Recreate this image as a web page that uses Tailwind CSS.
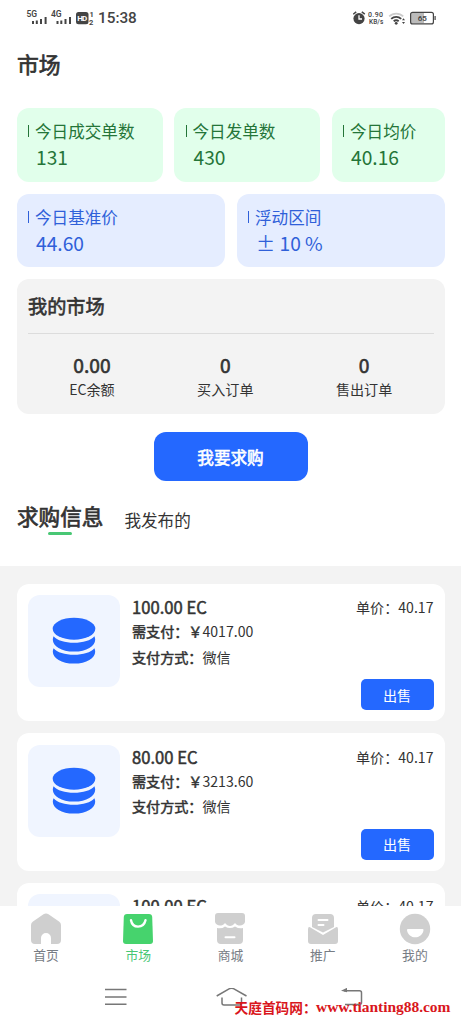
<!DOCTYPE html>
<html lang="zh-CN">
<head>
<meta charset="utf-8">
<meta name="viewport" content="width=device-width, initial-scale=1">
<title>市场</title>
<script src="https://cdn.jsdelivr.net/npm/@tailwindcss/browser@4"></script>
</head>
<body class="bg-white">
<svg class="hidden" aria-hidden="true">
  <symbol id="coins" viewBox="0 0 44 48">
    <ellipse cx="22" cy="11.700" rx="21.300" ry="11"/>
    <path d="M1.600 19.300C5 23.500 13 25.800 22 25.800S39 23.500 42.400 19.300C46 27 37 34.600 22 34.600S-2 27 1.600 19.300Z"/>
    <path d="M1.600 31.300C5 35.500 13 37.800 22 37.800S39 35.500 42.400 31.300C46 39 37 46.600 22 46.600S-2 39 1.600 31.300Z"/>
  </symbol>
</svg>
<div class="relative flex h-[1024px] w-[461px] flex-col overflow-hidden bg-white font-['Noto_Sans_CJK_SC',sans-serif] text-[#333]">
  <!-- status bar -->
  <header class="flex h-9 shrink-0 items-center justify-between pl-[26px] pr-[24px] font-[Roboto,sans-serif] text-[#444]">
    <div class="flex items-center">
      <svg class="h-4 w-[69px]" viewBox="0 0 69 16" fill="#444">
        <text x="0.5" y="7" font-size="8.500" font-weight="600" textLength="10.5">5G</text>
        <path d="M6 11h2v3H6zM9.8 10.5h2V14h-2zM14 9h2v5h-2zM18.6 7h2v7h-2zM30.5 11h2v3h-2zM34.3 10.5h2V14h-2zM38.5 9h2v5h-2zM43 7h2v7h-2z"/>
        <text x="25" y="7" font-size="8.500" font-weight="600" textLength="10.5">4G</text>
        <rect x="50" y="2" width="12.5" height="12.3" rx="2.5"/>
        <text x="51.3" y="11.3" font-size="8" font-weight="700" fill="#fff" textLength="10">HD</text>
        <text x="63.6" y="7.4" font-size="7.5" font-weight="700">1</text>
        <text x="63" y="14.5" font-size="7.5" font-weight="700">2</text>
      </svg>
      <span class="ml-[3px] text-[15.3px] font-medium leading-4">15:38</span>
    </div>
    <svg class="h-4 w-[84px]" viewBox="0 0 84 16" fill="#444">
      <circle cx="6" cy="8.6" r="5.6"/>
      <path d="M.2 4.2 3.2 1.9M11.8 4.2 8.8 1.9" stroke="#444" stroke-width="1.5" fill="none"/>
      <path d="M6 5.3v3.7h3" stroke="#fff" stroke-width="1.3" fill="none"/>
      <text x="15" y="7.4" font-size="7" font-weight="500" textLength="15">0.90</text>
      <text x="16" y="14" font-size="6.5" font-weight="500" textLength="14.3">KB/s</text>
      <g fill="none" stroke-width="1.8"><path d="M36.2 6.4a10 10 0 0 1 14 0" stroke="#ccc"/><path d="M38.2 8.9a7.2 7.2 0 0 1 10 0M40.7 11.3a3.8 3.8 0 0 1 5 0" stroke="#444"/></g>
      <circle cx="43.2" cy="13.3" r="1.4"/>
      <path d="m49 10.2 1.5-2 1.5 2zM49 11.9l1.5 2 1.5-2z"/>
      <rect x="58" y="3" width="13" height="10" fill="#bbb"/>
      <rect x="57.6" y="2.3" width="22.8" height="11.6" rx="2" fill="none" stroke="#444" stroke-width="1.2"/>
      <path d="M81.5 6h1.2v4h-1.2z"/>
      <text x="64.8" y="10.9" font-size="8" font-weight="600">65</text>
    </svg>
  </header>

  <h1 class="ml-[17px] mt-3 shrink-0 text-[21.8px] leading-8 [-webkit-text-stroke:0.7px]">市场</h1>

  <!-- statistics -->
  <section class="ml-[16.5px] mr-4 mt-[28.3px] shrink-0 text-[16.6px] leading-6">
    <div class="flex gap-[11.500px] text-[#247538]">
      <div class="h-[73.7px] w-[146px] rounded-xl bg-[#e1ffeb] pl-[11.500px] pt-[11px]">
        <div class="flex items-center gap-1.5"><i class="h-3 w-px bg-current"></i>今日成交单数</div>
        <div class="ml-2 mt-0.5 text-[19.2px]">131</div>
      </div>
      <div class="h-[73.7px] w-[146px] rounded-xl bg-[#e1ffeb] pl-[11.500px] pt-[11px]">
        <div class="flex items-center gap-1.5"><i class="h-3 w-px bg-current"></i>今日发单数</div>
        <div class="ml-2 mt-0.5 text-[19.2px]">430</div>
      </div>
      <div class="h-[73.7px] flex-1 rounded-xl bg-[#e1ffeb] pl-[11.500px] pt-[11px]">
        <div class="flex items-center gap-1.5"><i class="h-3 w-px bg-current"></i>今日均价</div>
        <div class="ml-2 mt-0.5 text-[19.2px]">40.16</div>
      </div>
    </div>
    <div class="mt-[11.600px] grid grid-cols-2 gap-[11.500px] text-[#2f60d9]">
      <div class="h-[73.7px] rounded-xl bg-[#e5edff] pl-[11.500px] pt-[11px]">
        <div class="flex items-center gap-1.5"><i class="h-3 w-px bg-current"></i>今日基准价</div>
        <div class="ml-2 mt-0.5 text-[19.2px]">44.60</div>
      </div>
      <div class="h-[73.7px] rounded-xl bg-[#e5edff] pl-[11.500px] pt-[11px]">
        <div class="flex items-center gap-1.5"><i class="h-3 w-px bg-current"></i>浮动区间</div>
        <div class="ml-2 mt-0.5 text-[19.2px]">± 10 %</div>
      </div>
    </div>
  </section>

  <!-- my market -->
  <section class="ml-[16.5px] mr-4 mt-[11.700px] h-[135.5px] shrink-0 rounded-xl bg-[#f3f3f3] px-[11.5px]">
    <h2 class="h-[55.5px] border-b border-[#dcdcdc] text-[19.2px] leading-[55px] [-webkit-text-stroke:0.6px]">我的市场</h2>
    <div class="flex justify-around pt-[18.500px] text-center text-[14.1px] leading-6">
      <div><div class="text-[19.2px] [-webkit-text-stroke:0.6px]">0.00</div><div>EC余额</div></div>
      <div><div class="text-[19.2px] [-webkit-text-stroke:0.6px]">0</div><div>买入订单</div></div>
      <div><div class="text-[19.2px] [-webkit-text-stroke:0.6px]">0</div><div>售出订单</div></div>
    </div>
  </section>

  <button class="mx-auto mt-[18px] h-[49px] w-[154px] shrink-0 rounded-xl bg-[#2468ff] text-[16.6px] leading-6 text-white [-webkit-text-stroke:0.6px]">我要求购</button>

  <!-- tabs -->
  <nav class="flex h-[84.5px] shrink-0 gap-[21px] pl-[17px] pt-[19px]">
    <div class="flex flex-col items-center">
      <span class="text-[21.6px] leading-8 [-webkit-text-stroke:0.7px]">求购信息</span>
      <i class="h-[2.5px] w-6 rounded-full bg-[#48c774]"></i>
    </div>
    <span class="pt-1.5 text-[16.6px] leading-7">我发布的</span>
  </nav>

  <!-- orders -->
  <main class="flex h-[340.4px] shrink-0 flex-col gap-[11.800px] overflow-hidden bg-[#f3f3f3] pl-[16.5px] pr-4 pt-[18px]">
    <article class="flex h-[137.5px] shrink-0 rounded-xl bg-white pl-[11.500px] pr-[11.5px] pt-[11.5px]">
      <div class="flex size-[92px] items-center justify-center rounded-xl bg-[#f0f5ff]"><svg class="h-12 w-11" fill="#2468ff"><use href="#coins"/></svg></div>
      <div class="ml-3 text-[14.1px] leading-[25.6px]">
        <div class="text-[16.6px] leading-6 [-webkit-text-stroke:0.5px]">100.00 EC</div>
        <div><span class="[-webkit-text-stroke:0.5px]">需支付：￥</span>4017.00</div>
        <div><span class="[-webkit-text-stroke:0.5px]">支付方式：</span>微信</div>
      </div>
      <div class="ml-auto flex flex-col items-end">
        <span class="text-[14.1px] leading-6">单价：40.17</span>
        <button class="mt-[60px] h-[31px] w-[73px] rounded-[5px] bg-[#2468ff] text-[14.1px] leading-5 text-white">出售</button>
      </div>
    </article>
    <article class="flex h-[137.5px] shrink-0 rounded-xl bg-white pl-[11.500px] pr-[11.5px] pt-[11.5px]">
      <div class="flex size-[92px] items-center justify-center rounded-xl bg-[#f0f5ff]"><svg class="h-12 w-11" fill="#2468ff"><use href="#coins"/></svg></div>
      <div class="ml-3 text-[14.1px] leading-[25.6px]">
        <div class="text-[16.6px] leading-6 [-webkit-text-stroke:0.5px]">80.00 EC</div>
        <div><span class="[-webkit-text-stroke:0.5px]">需支付：￥</span>3213.60</div>
        <div><span class="[-webkit-text-stroke:0.5px]">支付方式：</span>微信</div>
      </div>
      <div class="ml-auto flex flex-col items-end">
        <span class="text-[14.1px] leading-6">单价：40.17</span>
        <button class="mt-[60px] h-[31px] w-[73px] rounded-[5px] bg-[#2468ff] text-[14.1px] leading-5 text-white">出售</button>
      </div>
    </article>
    <article class="flex h-[137.5px] shrink-0 rounded-xl bg-white pl-[11.500px] pr-[11.5px] pt-[11.5px]">
      <div class="size-[92px] rounded-xl bg-[#f0f5ff]"></div>
      <div class="ml-3 text-[16.6px] leading-6 [-webkit-text-stroke:0.5px]">100.00 EC</div>
      <span class="ml-auto text-[14.1px] leading-6">单价：40.17</span>
    </article>
  </main>

  <!-- tab bar -->
  <nav class="grid h-[70px] shrink-0 grid-cols-5 bg-white pt-[7px] text-center text-[12.8px] leading-5 text-[#777c84]">
    <div class="flex flex-col items-center">
      <svg class="size-8" viewBox="0 0 32 32" fill="#cfcfcf"><path d="M13.5 1.2q2.5-1.6 5 0L29 8.5q2 1.3 2 3.6V27q0 4-4 4h-6v-6a5 5 0 0 0-10 0v6H5q-4 0-4-4V12q0-2.2 2-3.5Z"/></svg>
      <span>首页</span>
    </div>
    <div class="flex flex-col items-center text-[#48c774]">
      <svg class="size-8" viewBox="0 0 32 32"><path d="M5 1h22q3 0 3.2 3L31 28q0 3-3 3H4q-3 0-3-3L1.8 4Q2 1 5 1Z" fill="#46d36d"/><path d="M9 7.2c1.5 8.5 12.5 8.5 14.5 0" fill="none" stroke="#fff" stroke-width="2.4" stroke-linecap="round"/></svg>
      <span>市场</span>
    </div>
    <div class="flex flex-col items-center">
      <svg class="size-8" viewBox="0 0 32 32" fill="#cfcfcf"><path d="M4 0h24q3 0 3 3v6c-1 4-7 5-10 1-3 4-7 4-10 0C8 14 2 13 1 9V3q0-3 3-3ZM3 15q5 1 8-1.6 5 3.2 10 0 4 2.6 8 1.6v12q0 4-4 4H7q-4 0-4-4Z"/><path d="M11.5 24.2h9" stroke="#fff" stroke-width="2" stroke-linecap="round"/></svg>
      <span>商城</span>
    </div>
    <div class="flex flex-col items-center">
      <svg class="size-8" viewBox="0 0 32 32" fill="#cfcfcf"><path d="M9 1h14q4 0 4 4v9L16 19.500 5 14V5q0-4 4-4ZM3 14.300l13 7.700 13-7.700q2-.8 2 2V28q0 3-3 3H4q-3 0-3-3V16.300q0-2.800 2-2Z"/><path d="M11.500 7h9M11.500 12h5" stroke="#fff" stroke-width="2" stroke-linecap="round"/></svg>
      <span>推广</span>
    </div>
    <div class="flex flex-col items-center">
      <svg class="size-8" viewBox="0 0 32 32"><circle cx="16" cy="16" r="15.2" fill="#cfcfcf"/><path d="M9 16h14.500q1.200 0 1 1.200c-1.500 9.500-15 9.500-16.500 0Q7.800 16 9 16Z" fill="#fff"/></svg>
      <span>我的</span>
    </div>
  </nav>

  <!-- system navigation -->
  <div class="flex flex-1 items-start pl-[105px] pt-3">
    <svg class="h-5 w-[22px]" viewBox="0 0 22 20" fill="none" stroke="#777" stroke-width="1.500"><path d="M0 1.500h21.500M0 9h21.500M0 16.200h21.500"/></svg>
    <svg class="ml-[89px] h-5 w-[31px]" viewBox="0 0 31 20" fill="none" stroke="#777" stroke-width="1.500"><path d="M.700 8 13.500.700q2-1 4 0L30.500 8M6 9.500V15q0 2 2 2h15.500q2 0 2-2V9.500"/></svg>
    <svg class="ml-[93.500px] h-5 w-[24px]" viewBox="0 0 24 20" fill="none" stroke="#777" stroke-width="1.500"><path d="M3 2.800h15.500q2 0 2 2V14.500q0 2-2 2H4"/><path d="m0 2.800 6-3v4.500Z" fill="#777" stroke="none"/></svg>
  </div>

  <!-- site watermark -->
  <svg class="absolute left-[234px] top-[996px] h-6 w-[222px]" viewBox="0 0 222 24" fill="#d9161c" font-weight="700">
    <text x="0.500" y="16.500" font-size="13.700" class="font-['Noto_Sans_CJK_SC',sans-serif]">天庭首码网：</text>
    <text x="82" y="16" font-size="15.500" textLength="134.500" class="font-['Liberation_Serif',serif]">www.tianting88.com</text>
  </svg>
</div>
</body>
</html>
